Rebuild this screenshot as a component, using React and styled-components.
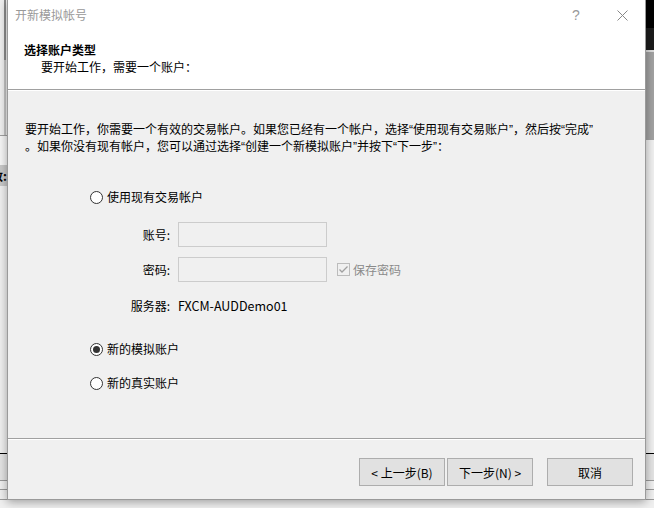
import styled, { createGlobalStyle } from 'styled-components';

const GlobalStyle = createGlobalStyle`
  html, body {
    margin: 0;
    padding: 0;
    background: #f0f0f0;
  }
  body {
    font-family: "Noto Sans CJK SC", "Microsoft YaHei", "Liberation Sans", sans-serif;
    font-size: 12px;
    color: #000;
  }
`

const Desktop = styled.div`
  display: flex;
  width: 654px;
  height: 508px;
  overflow: hidden;
  background: #f0f0f0;
`

// the application behind the dialog, only a sliver shows on each side
const Strip = styled.div`
  display: flex;
  flex-direction: column;
  width: ${({w}) => w}px;
  flex-shrink: 0;
`

const Band = styled.div`
  height: ${({h}) => h}px;
  flex-shrink: 0;
  background: ${({bg}) => bg || '#f0f0f0'};
  display: flex;
  justify-content: ${({end}) => end ? 'flex-end' : 'flex-start'};
  align-items: center;
  overflow: hidden;
`

const Rail = styled.div`
  width: 2px;
  height: 100%;
  margin-left: 4px;
  background: ${({c}) => c};
`

const CutText = styled.span`
  font-weight: bold;
  font-size: 12px;
  white-space: nowrap;
  color: #000;
`

const Window = styled.div`
  position: relative;
  z-index: 1;
  width: 639px;
  height: 500px;
  box-sizing: border-box;
  flex-shrink: 0;
  display: flex;
  flex-direction: column;
  border: 1px solid #9a9a9a;
  border-top: none;
  background: #f0f0f0;
  box-shadow: 0 2px 9px rgba(0, 0, 0, 0.35);
`

const TitleBar = styled.div`
  display: flex;
  align-items: center;
  height: 30px;
  background: #fff;
`

const Title = styled.div`
  flex: 1;
  padding-left: 7px;
  color: #999;
  line-height: 16px;
`

const Caption = styled.div`
  width: 46px;
  height: 30px;
  display: flex;
  align-items: center;
  justify-content: center;
  color: #999;
  font-family: "Liberation Sans", sans-serif;
  font-size: 14px;
`

const Header = styled.div`
  height: 59px;
  box-sizing: border-box;
  padding: 12px 0 0 16px;
  background: #fff;
`

const HeaderTitle = styled.div`
  font-weight: bold;
  line-height: 16px;
`

const HeaderSub = styled.div`
  margin-top: 1px;
  padding-left: 17px;
  line-height: 16px;
`

const Divider = styled.div`
  height: 1px;
  background: #a0a0a0;
  border-bottom: 1px solid #fff;
  flex-shrink: 0;
`

const Body = styled.div`
  flex: 1;
  padding: 29px 0 0 17px;
`

const Intro = styled.p`
  margin: 0;
  line-height: 17px;
  width: 600px;
`

// curly quotes are narrow in the original UI font
const Q = styled.span`
  font-family: "Liberation Sans", sans-serif;
  line-height: 1;
`

const Options = styled.div`
  display: flex;
  flex-direction: column;
  margin: 35px 0 0 65px;
`

const RadioRow = styled.label`
  display: flex;
  align-items: center;
  gap: 4px;
  height: 16px;
  line-height: 16px;
  margin-top: ${({mt}) => mt || 0}px;
`

const RadioDot = styled.span`
  width: 13px;
  height: 13px;
  box-sizing: border-box;
  border: 1px solid #333;
  border-radius: 50%;
  background: #fff;
  display: flex;
  align-items: center;
  justify-content: center;
  &::after {
    content: '';
    width: 7px;
    height: 7px;
    border-radius: 50%;
    background: ${({checked}) => checked ? '#333' : 'transparent'};
  }
`

const FieldGrid = styled.div`
  display: grid;
  grid-template-columns: 80px 149px auto;
  column-gap: 8px;
  row-gap: 10px;
  align-items: center;
  margin-top: 17px;
`

const FieldLabel = styled.div`
  text-align: right;
  line-height: 16px;
  padding-top: ${({pad}) => pad || 0}px;
`

const Field = styled.div`
  height: 25px;
  box-sizing: border-box;
  border: 1px solid #ccc;
  background: #f0f0f0;
`

const Value = styled.div`
  line-height: 16px;
  font-size: 12.5px;
  padding-top: 6px;
`

const SaveBox = styled.div`
  display: flex;
  align-items: center;
  gap: 3px;
  margin-left: 2px;
  color: #8a8a8a;
`

const Footer = styled.div`
  display: flex;
  justify-content: flex-end;
  align-items: flex-start;
  height: 59px;
  box-sizing: border-box;
  padding: 18px 12px 0 0;
`

const Button = styled.button`
  width: 86px;
  height: 28px;
  margin-left: ${({gap}) => gap}px;
  border: 1px solid #adadad;
  background: #e1e1e1;
  font-family: inherit;
  font-size: 12px;
  color: #000;
  padding: 0;
`

function Radio({ checked, children, mt }) {
  return (
    <RadioRow mt={mt}>
      <RadioDot checked={checked} />
      {children}
    </RadioRow>
  );
}

export default function App() {
  return (
    <>
      <GlobalStyle />
      <Desktop>
        <Strip w={7}>
          <Band h={60}><Rail c="#8c8c8c" /></Band>
          <Band h={75}><Rail c="#c4c4c4" /></Band>
          <Band h={1} bg="#a0a0a0" />
          <Band h={29} bg="#f6f6f6" />
          <Band h={21} bg="#c8c8c8" end><CutText>数:</CutText></Band>
          <Band h={267} bg="#f0f0f0" />
          <Band h={1} bg="#000" />
          <Band h={26} bg="#e4e4e4" />
          <Band h={1} bg="#9a9a9a" />
          <Band h={8} bg="#f0f0f0" />
          <Band h={1} bg="#9a9a9a" />
          <Band h={9} bg="#f0f0f0" />
          <Band h={1} bg="#9a9a9a" />
          <Band h={10} bg="#f0f0f0" />
        </Strip>

        <Window>
          <TitleBar>
            <Title>开新模拟帐号</Title>
            <Caption>?</Caption>
            <Caption>
              <svg width="11" height="11" viewBox="0 0 11 11">
                <path d="M0.5 0.5 L10.5 10.5 M10.5 0.5 L0.5 10.5" stroke="#888" strokeWidth="1" fill="none" />
              </svg>
            </Caption>
          </TitleBar>
          <Header>
            <HeaderTitle>选择账户类型</HeaderTitle>
            <HeaderSub>要开始工作，需要一个账户：</HeaderSub>
          </Header>
          <Divider />

          <Body>
            <Intro>
              要开始工作，你需要一个有效的交易帐户。如果您已经有一个帐户，选择<Q>“</Q>使用现有交易账户<Q>”</Q>，然后按<Q>“</Q>完成<Q>”</Q>
              <br />
              。如果你没有现有帐户，您可以通过选择<Q>“</Q>创建一个新模拟账户<Q>”</Q>并按下<Q>“</Q>下一步<Q>”</Q>：
            </Intro>

            <Options>
              <Radio>使用现有交易帐户</Radio>
              <FieldGrid>
                <FieldLabel>账号:</FieldLabel>
                <Field />
                <span />
                <FieldLabel>密码:</FieldLabel>
                <Field />
                <SaveBox>
                  <svg width="13" height="13" viewBox="0 0 13 13">
                    <rect x="0.5" y="0.5" width="12" height="12" fill="#f0f0f0" stroke="#bcbcbc" />
                    <path d="M2.5 6.5 L5 9 L10.5 3.5" stroke="#a0a0a0" strokeWidth="1.3" fill="none" />
                  </svg>
                  保存密码
                </SaveBox>
                <FieldLabel pad={6}>服务器:</FieldLabel>
                <Value>FXCM-AUDDemo01</Value>
                <span />
              </FieldGrid>
              <Radio checked mt={27}>新的模拟账户</Radio>
              <Radio mt={18}>新的真实账户</Radio>
            </Options>
          </Body>

          <Divider />
          <Footer>
            <Button gap={0}>&lt; 上一步(B)</Button>
            <Button gap={2}>下一步(N) &gt;</Button>
            <Button gap={14}>取消</Button>
          </Footer>
        </Window>

        <Strip w={8}>
          <Band h={28} bg="#000" />
          <Band h={22} bg="#1c1c1c" />
          <Band h={2} bg="#dcdcdc" />
          <Band h={88} bg="#a2a2a2" />
          <Band h={313} bg="#f0f0f0" />
          <Band h={1} bg="#000" />
          <Band h={26} bg="#e4e4e4" />
          <Band h={1} bg="#9a9a9a" />
          <Band h={8} bg="#f0f0f0" />
          <Band h={1} bg="#9a9a9a" />
          <Band h={9} bg="#f0f0f0" />
          <Band h={1} bg="#9a9a9a" />
          <Band h={8} bg="#f0f0f0" />
        </Strip>
      </Desktop>
    </>
  );
}
